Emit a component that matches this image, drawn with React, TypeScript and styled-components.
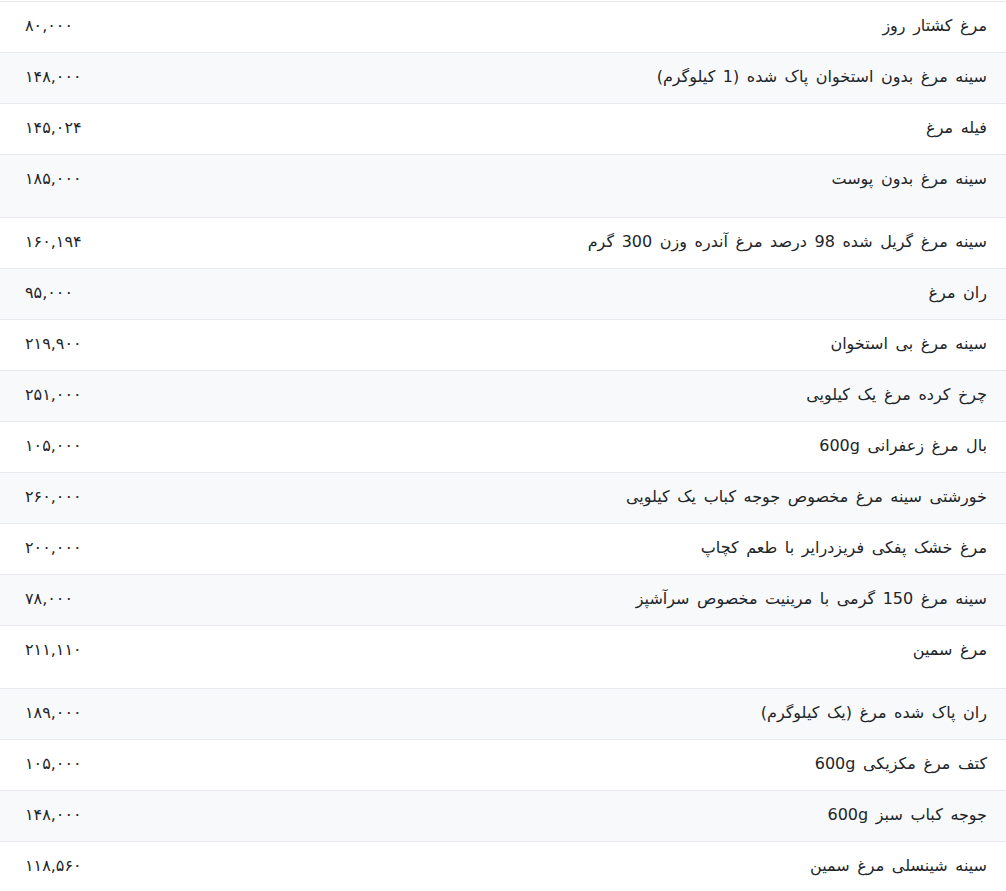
import React from "react";
import styled, { createGlobalStyle } from "styled-components";

const GlobalStyle = createGlobalStyle`
  html, body {
    margin: 0;
    padding: 0;
    background: #ffffff;
  }
  body {
    font-family: "DejaVu Sans", "Noto Sans", sans-serif;
  }
`;

const Table = styled.div`
  direction: rtl;
  width: 100%;
  padding-top: 1px;
  font-family: "DejaVu Sans", "Noto Sans", sans-serif;
  color: #212529;
`;

const Row = styled.div<{ $striped: boolean; $tall: boolean }>`
  display: flex;
  align-items: flex-start;
  justify-content: space-between;
  border-top: 1px solid #e6e8eb;
  background: ${(p) => (p.$striped ? "#f8f9fa" : "#ffffff")};
  padding: 11px 19px ${(p) => (p.$tall ? "25px" : "13px")} 25px;
  min-height: 26px;
`;

const Name = styled.div`
  font-size: 16px;
  line-height: 26px;
  word-spacing: 2.5px;
  text-align: right;
`;

const Price = styled.div`
  direction: ltr;
  font-size: 16px;
  line-height: 26px;
  text-align: left;
  min-width: 120px;
`;

type Item = { name: string; price: string; tall?: boolean };

const items: Item[] = [
  { name: "مرغ کشتار روز", price: "۸۰,۰۰۰" },
  { name: "سینه مرغ بدون استخوان پاک شده (1 کیلوگرم)", price: "۱۴۸,۰۰۰" },
  { name: "فیله مرغ", price: "۱۴۵,۰۲۴" },
  { name: "سینه مرغ بدون پوست", price: "۱۸۵,۰۰۰", tall: true },
  { name: "سینه مرغ گریل شده 98 درصد مرغ آندره وزن 300 گرم", price: "۱۶۰,۱۹۴" },
  { name: "ران مرغ", price: "۹۵,۰۰۰" },
  { name: "سینه مرغ بی استخوان", price: "۲۱۹,۹۰۰" },
  { name: "چرخ کرده مرغ یک کیلویی", price: "۲۵۱,۰۰۰" },
  { name: "بال مرغ زعفرانی 600g", price: "۱۰۵,۰۰۰" },
  { name: "خورشتی سینه مرغ مخصوص جوجه کباب یک کیلویی", price: "۲۶۰,۰۰۰" },
  { name: "مرغ خشک پفکی فریزدرایر با طعم کچاپ", price: "۲۰۰,۰۰۰" },
  { name: "سینه مرغ 150 گرمی با مرینیت مخصوص سرآشپز", price: "۷۸,۰۰۰" },
  { name: "مرغ سمین", price: "۲۱۱,۱۱۰", tall: true },
  { name: "ران پاک شده مرغ (یک کیلوگرم)", price: "۱۸۹,۰۰۰" },
  { name: "کتف مرغ مکزیکی 600g", price: "۱۰۵,۰۰۰" },
  { name: "جوجه کباب سبز 600g", price: "۱۴۸,۰۰۰" },
  { name: "سینه شینسلی مرغ سمین", price: "۱۱۸,۵۶۰" },
];

export default function App() {
  return (
    <>
      <GlobalStyle />
      <Table>
        {items.map((it, i) => (
          <Row key={i} $striped={i % 2 === 1} $tall={!!it.tall}>
            <Name>{it.name}</Name>
            <Price>{it.price}</Price>
          </Row>
        ))}
      </Table>
    </>
  );
}
